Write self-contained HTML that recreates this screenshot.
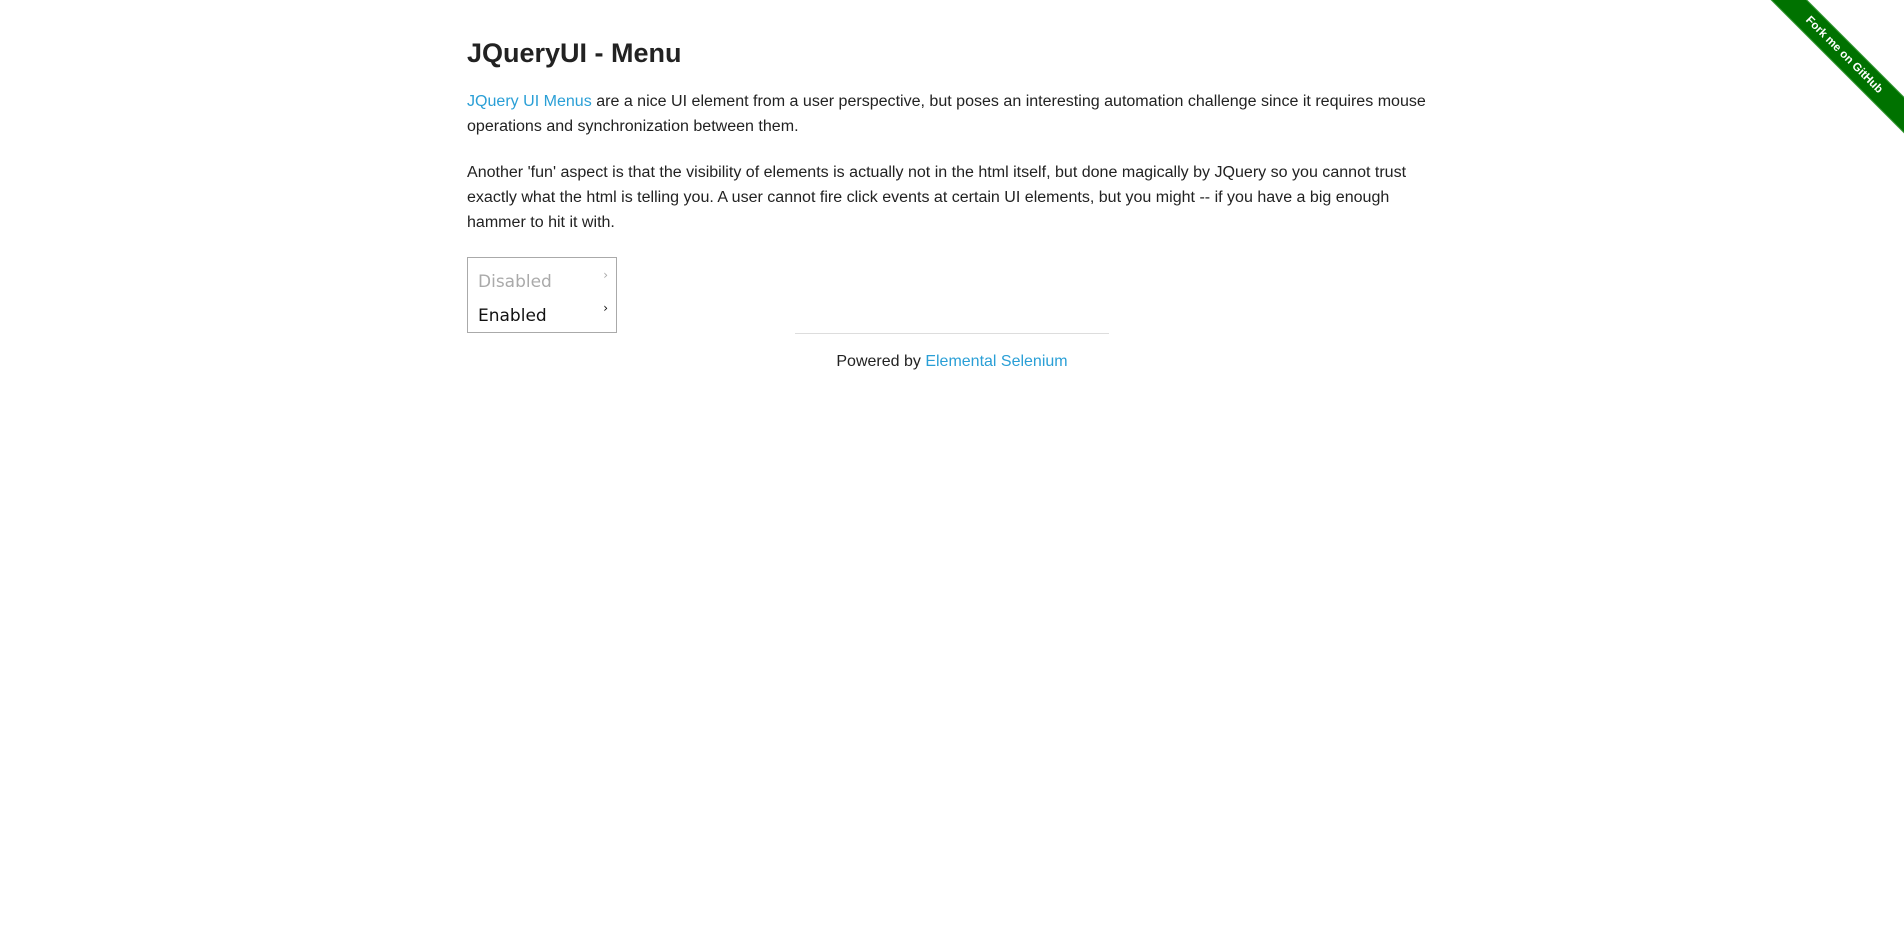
<!DOCTYPE html>
<html><head><meta charset="utf-8"><style>
body{margin:0;background:#fff;font-family:"Liberation Sans",Arial,sans-serif;color:#222;width:1904px;height:947px;overflow:hidden;position:relative}
.c{position:absolute;left:467px;top:0;width:980px}
h3{font-size:27px;font-weight:bold;margin:0;position:absolute;top:38px;left:0;white-space:nowrap}
p{font-size:16.05px;line-height:25px;margin:0;position:absolute;left:0;width:980px}
a{color:#2a9fd6;text-decoration:none}
.menu{position:absolute;left:0;top:257px;width:148px;height:74px;border:1px solid #aaa;font-family:"DejaVu Sans",sans-serif;font-size:17px}
.menu div{position:absolute;left:10px}
.ar{position:absolute;right:8px;font-size:12px}
hr{position:absolute;left:795px;top:333px;width:314px;border:0;border-top:1px solid #ddd;margin:0}
.pw{position:absolute;left:0;width:1904px;text-align:center;top:350px;font-size:16px;line-height:24px}
.rib{position:absolute;right:-55px;top:42px;width:230px;height:26px;background:#007200;transform:rotate(45deg);color:#fff;text-align:center;font-size:11.5px;font-weight:bold;line-height:26px;box-shadow:0 0 0 1px #3a9a3a inset}
</style></head><body>
<div class="c">
<h3>JQueryUI - Menu</h3>
<p style="top:89px"><a>JQuery UI Menus</a> are a nice UI element from a user perspective, but poses an interesting automation challenge since it requires mouse operations and synchronization between them.</p>
<p style="top:160px">Another 'fun' aspect is that the visibility of elements is actually not in the html itself, but done magically by JQuery so you cannot trust exactly what the html is telling you. A user cannot fire click events at certain UI elements, but you might -- if you have a big enough hammer to hit it with.</p>
<div class="menu">
<div style="top:14px;color:#aaa">Disabled</div><span class="ar" style="top:10px;color:#aaa">›</span>
<div style="top:48px;color:#111">Enabled</div><span class="ar" style="top:43px;color:#111">›</span>
</div>
</div>
<hr>
<div class="pw">Powered by <a>Elemental Selenium</a></div>
<div class="rib">Fork me on GitHub</div>
</body></html>
